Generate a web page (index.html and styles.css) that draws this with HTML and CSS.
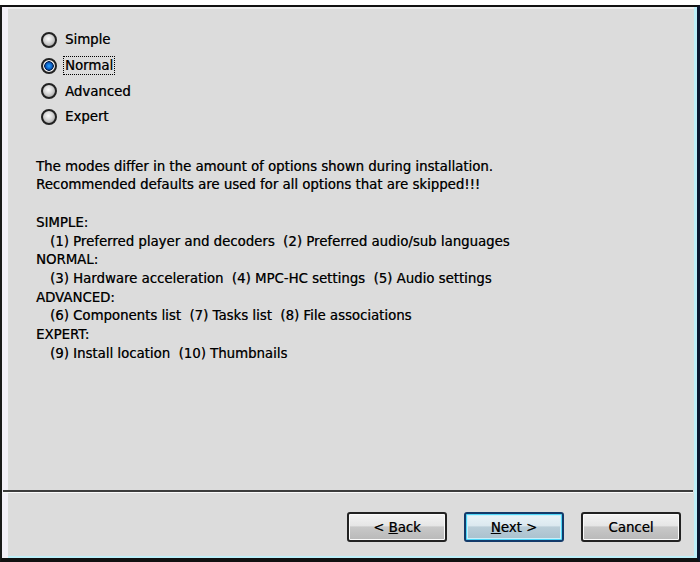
FILE: index.html
```html
<!DOCTYPE html>
<html lang="en">
<head>
    <meta charset="UTF-8">
    <title>Setup - Installation Mode</title>
    <link rel="stylesheet" href="styles.css">
</head>
<body>
    <div class="frame">
        <div class="content">
            <div class="modes">
                <label class="radio"><span class="dot"></span><span class="text">Simple</span></label>
                <label class="radio checked"><span class="dot"></span><span class="text focus">Normal</span></label>
                <label class="radio"><span class="dot"></span><span class="text">Advanced</span></label>
                <label class="radio"><span class="dot"></span><span class="text">Expert</span></label>
            </div>
            <div class="info">
                <p>The modes differ in the amount of options shown during installation.</p>
                <p>Recommended defaults are used for all options that are skipped!!!</p>
                <p>&nbsp;</p>
                <p>SIMPLE:</p>
                <p class="sub">(1) Preferred player and decoders&nbsp; (2) Preferred audio/sub languages</p>
                <p>NORMAL:</p>
                <p class="sub">(3) Hardware acceleration&nbsp; (4) MPC-HC settings&nbsp; (5) Audio settings</p>
                <p>ADVANCED:</p>
                <p class="sub">(6) Components list&nbsp; (7) Tasks list&nbsp; (8) File associations</p>
                <p>EXPERT:</p>
                <p class="sub">(9) Install location&nbsp; (10) Thumbnails</p>
            </div>
        </div>
        <div class="separator"></div>
        <div class="buttons">
            <button class="btn">&lt; <u>B</u>ack</button>
            <button class="btn default"><u>N</u>ext &gt;</button>
            <button class="btn">Cancel</button>
        </div>
    </div>
</body>
</html>
```

FILE: styles.css
```css
html, body {
    margin: 0;
    padding: 0;
    background: #fff;
}
body {
    font-family: "DejaVu Sans", Verdana, sans-serif;
    font-size: 13.3px;
    color: #000;
    text-shadow: 0.4px 0 0 rgba(0,0,0,0.6);
}
.frame {
    margin-top: 5px;
    height: 557px;
    box-sizing: border-box;
    display: flex;
    flex-direction: column;
    background: #dcdcdc;
    border-top: 2px solid #111;
    border-left: 2px solid #1a1a1a;
    border-right: 3px solid #0b1630;
    border-bottom: 4px solid #111;
    box-shadow: inset 6px 0 0 #f3f0f8, inset -3px -2px 0 #bfeff8, inset 0 2px 0 #eeeeee;
}
.content {
    flex: 1;
    padding: 20px 0 0 39px;
}
.modes {
    display: flex;
    flex-direction: column;
}
.radio {
    display: flex;
    align-items: center;
    gap: 7px;
    height: 25.7px;
}
.dot {
    width: 16px;
    height: 16px;
    box-sizing: border-box;
    border-radius: 50%;
    border: 2px solid #222;
    background: radial-gradient(circle at 45% 40%, #fdfdfd 0, #d4d4d4 45%, #8d8d8d 100%);
}
.checked .dot {
    background: radial-gradient(circle at 50% 50%, #2aa6ff 0, #0a5fc8 3px, #05204a 4.5px, #f4f4f4 5px, #bdbdbd 100%);
}
.text {
    line-height: 17px;
    padding: 0 1px;
}
.focus {
    outline: 1px dotted #000;
    outline-offset: 0;
}
.info {
    margin-top: 28px;
    margin-left: -5px;
}
.info p {
    margin: 0;
    line-height: 18.7px;
    white-space: nowrap;
}
.info .sub {
    padding-left: 14px;
}
.separator {
    margin: 0 4px 0 1px;
    border-top: 2px solid #3c3c3c;
    border-bottom: 1px solid #fafafa;
}
.buttons {
    display: flex;
    justify-content: flex-end;
    gap: 17px;
    padding: 19px 16px 16px 0;
}
.btn {
    width: 100px;
    height: 30px;
    box-sizing: border-box;
    font-family: "DejaVu Sans", Verdana, sans-serif;
    font-size: 13.3px;
    color: #000;
    text-shadow: 0.4px 0 0 rgba(0,0,0,0.6);
    border: 2px solid #222;
    border-radius: 3px;
    background: linear-gradient(#f4f4f4 0, #e6e6e6 45%, #c8c8c8 50%, #b9b9b9 100%);
    box-shadow: inset 0 0 0 1px #fbfbfb;
    padding: 0;
}
.btn.default {
    border-color: #123a6a;
    box-shadow: inset 0 0 0 1px #4fd6f7, inset 0 0 0 2px #c9f0fb;
    background: linear-gradient(#eaf4f8 0, #dbe8ef 45%, #b9cdd8 50%, #a9c0cd 100%);
}
```
